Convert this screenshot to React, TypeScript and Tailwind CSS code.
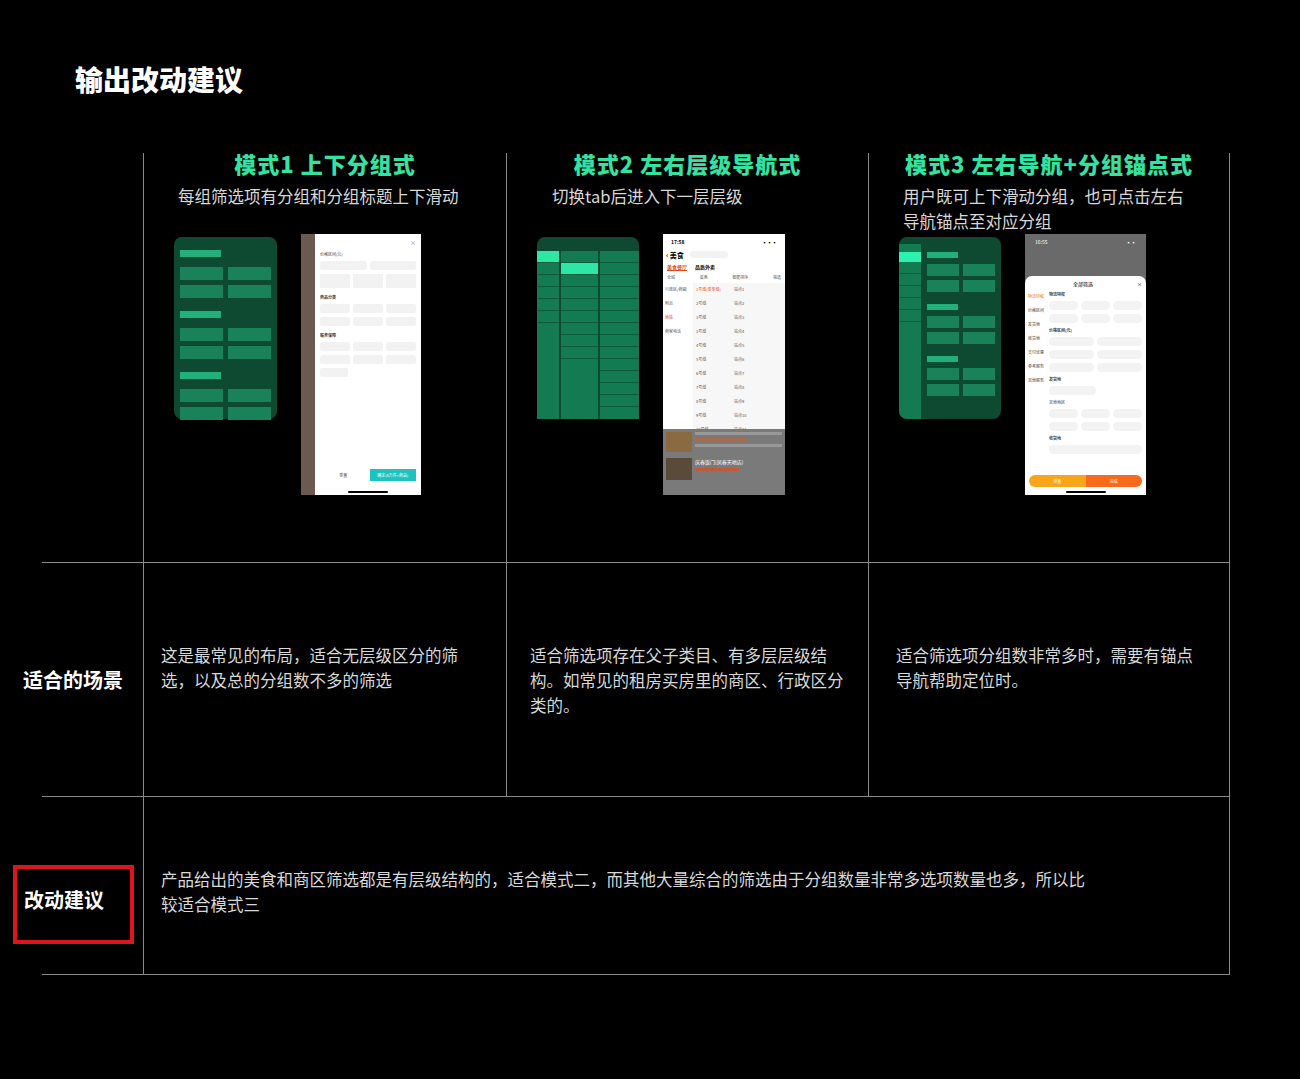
const font = { fontFamily: '"Noto Sans CJK SC", "Noto Sans", sans-serif' };

function Wire1() {
  const group = (
    <div className="flex flex-col gap-[5px]">
      <div className="w-[41px] h-[7px] bg-[#22b07a]" />
      <div className="grid grid-cols-2 gap-[5px] mt-[5px]">
        {[0, 1, 2, 3].map((i) => (
          <div key={i} className="h-[13px] bg-[#1a8258]" />
        ))}
      </div>
    </div>
  );
  return (
    <div className="w-[103px] h-[182px] rounded-[8px] bg-[#0e4a31] px-[6px] pt-[13px] flex flex-col gap-[13px]">
      {group}
      {group}
      {group}
    </div>
  );
}

function Wire2() {
  const rows = (n: number, hi: number) =>
    Array.from({ length: n }).map((_, i) => (
      <div key={i} className={`h-[12px] border-b border-[#0e5a3a] ${i === hi ? 'bg-[#2ee6a6]' : 'bg-[#147a52]'}`} />
    ));
  return (
    <div className="w-[102px] h-[182px] rounded-t-[8px] bg-[#0e4a31] pt-[14px] flex gap-[2px] overflow-hidden">
      <div className="w-[22px] bg-[#137a52] flex flex-col">{rows(6, 0)}</div>
      <div className="w-[37px] bg-[#137a52] flex flex-col">{rows(9, 1)}</div>
      <div className="flex-1 bg-[#137a52] flex flex-col">{rows(13, -1)}</div>
    </div>
  );
}

function Wire3() {
  const group = (
    <div className="flex flex-col">
      <div className="w-[31px] h-[6px] bg-[#22b07a]" />
      <div className="grid grid-cols-2 gap-[4px] mt-[6px]">
        {[0, 1, 2, 3].map((i) => (
          <div key={i} className="h-[12px] bg-[#1a8258]" />
        ))}
      </div>
    </div>
  );
  return (
    <div className="w-[102px] h-[182px] rounded-[8px] bg-[#0e4a31] pt-[7px] flex overflow-hidden">
      <div className="w-[22px] flex flex-col bg-[#137a52]">
        <div className="h-[8px]" />
        <div className="h-[10px] bg-[#2ef0b0]" />
        {[0, 1, 2, 3, 4].map((i) => (
          <div key={i} className="h-[12px] border-b border-[#0e5a3a]" />
        ))}
      </div>
      <div className="flex-1 px-[6px] pt-[8px] flex flex-col gap-[12px]">
        {group}
        {group}
        {group}
      </div>
    </div>
  );
}

function Chip({ w = 'flex-1' }: { w?: string }) {
  return <div className={`${w} h-[9px] bg-[#f2f2f2] rounded-[2px]`} />;
}

function Phone1() {
  return (
    <div className="w-[120px] h-[261px] bg-[#555] flex">
      <div className="w-[14px] bg-[#6a5a52]" />
      <div className="flex-1 bg-white px-[5px] pt-[4px] flex flex-col gap-[4px] text-[4px] text-[#444]">
        <div className="text-right text-[6px] text-[#888]">×</div>
        <div>价格区间(元)</div>
        <div className="flex gap-[3px]"><Chip /><Chip /></div>
        <div className="flex gap-[3px]"><div className="flex-1 h-[14px] bg-[#f2f2f2]" /><div className="flex-1 h-[14px] bg-[#f2f2f2]" /><div className="flex-1 h-[14px] bg-[#f2f2f2]" /></div>
        <div className="font-bold mt-[2px]">商品分类</div>
        <div className="flex gap-[3px]"><Chip /><Chip /><Chip /></div>
        <div className="flex gap-[3px]"><Chip /><Chip /><Chip /></div>
        <div className="font-bold mt-[2px]">服务保障</div>
        <div className="flex gap-[3px]"><Chip /><Chip /><Chip /></div>
        <div className="flex gap-[3px]"><Chip /><Chip /><Chip /></div>
        <div className="flex gap-[3px]"><Chip w="w-[28px]" /></div>
        <div className="flex-1" />
        <div className="flex gap-[3px] pb-[6px]">
          <div className="flex-1 h-[12px] text-center leading-[12px]">重置</div>
          <div className="flex-1 h-[12px] bg-[#1cc3c0] text-white text-center leading-[12px]">确定(4万件+商品)</div>
        </div>
        <div className="mx-auto w-[40px] h-[2px] bg-black rounded mb-[2px]" />
      </div>
    </div>
  );
}

function Phone2() {
  const mid = ['1号线(莘莘线)', '2号线', '3号线', '3号线', '4号线', '5号线', '6号线', '7号线', '8号线', '9号线', '10号线', '11号线'];
  return (
    <div className="w-[122px] h-[261px] bg-white flex flex-col overflow-hidden text-[4px] text-[#555]">
      <div className="flex justify-between px-[8px] pt-[4px] text-[5px] font-bold text-black"><span>17:58</span><span>▪▪▪</span></div>
      <div className="flex items-center gap-[6px] px-[3px] pt-[4px] text-[7px] font-bold text-black"><span>‹ 美食</span><div className="w-[38px] h-[7px] rounded bg-[#f3f3f3]" /></div>
      <div className="flex gap-[8px] px-[4px] pt-[3px] text-[5px] font-bold text-[#e24a1a]"><span className="underline">美食餐厅</span><span className="text-black">品质外卖</span></div>
      <div className="flex justify-between px-[4px] pt-[3px]"><span>全城</span><span>菜系</span><span>智能排序</span><span>筛选</span></div>
      <div className="flex h-[146px] mt-[3px]">
        <div className="w-[30px] bg-white flex flex-col gap-[8px] px-[2px] pt-[3px]"><span>行政区/商圈</span><span>附近</span><span className="text-[#e24a1a]">地铁</span><span>商家电话</span></div>
        <div className="w-[38px] bg-[#f7f7f7] flex flex-col gap-[8px] px-[3px] pt-[3px]">{mid.map((m, i) => <span key={i} className={i === 0 ? 'text-[#e24a1a]' : ''}>{m}</span>)}</div>
        <div className="flex-1 bg-[#f7f7f7] flex flex-col gap-[8px] px-[3px] pt-[3px]">{mid.map((_, i) => <span key={i}>站点{i + 1}</span>)}</div>
      </div>
      <div className="flex-1 bg-[#7a7a7a] px-[3px] pt-[3px] flex flex-col gap-[6px]">
        <div className="flex gap-[3px]"><div className="w-[26px] h-[20px] bg-[#8a6a40]" /><div className="flex-1 flex flex-col gap-[3px]"><div className="h-[3px] bg-[#999]" /><div className="h-[3px] bg-[#a86a50] w-[60%]" /><div className="h-[3px] bg-[#999]" /></div></div>
        <div className="flex gap-[3px]"><div className="w-[26px] h-[22px] bg-[#5a4a3a]" /><div className="flex-1 flex flex-col gap-[3px]"><div className="text-[5px] text-white">庆春饭门(凤春天地店)</div><div className="h-[3px] bg-[#c05a3a] w-[50%]" /></div></div>
      </div>
    </div>
  );
}

function Phone3() {
  const Pill = () => <div className="flex-1 h-[9px] bg-[#f3f3f3] rounded-full" />;
  return (
    <div className="w-[121px] h-[261px] bg-[#6a6a6a] flex flex-col overflow-hidden text-[4px] text-[#444]">
      <div className="flex justify-between px-[10px] pt-[4px] text-[5px] text-white"><span>16:55</span><span>▪▪</span></div>
      <div className="h-[30px]" />
      <div className="flex-1 bg-white rounded-t-[7px] flex flex-col">
        <div className="flex justify-between px-[4px] pt-[4px] text-[5px] text-black"><span /><span>全部筛选</span><span>×</span></div>
        <div className="flex flex-1 pt-[4px]">
          <div className="w-[24px] flex flex-col gap-[8px] pl-[3px] pt-[2px]"><span className="text-[#f06a2a]">物流特权</span><span>价格区间</span><span>发货地</span><span>收货地</span><span>支付优惠</span><span>参考服务</span><span>其他服务</span></div>
          <div className="flex-1 flex flex-col gap-[4px] pr-[4px]">
            <span className="font-bold">物流特权</span>
            <div className="flex gap-[3px]"><Pill /><Pill /><Pill /></div>
            <div className="flex gap-[3px]"><Pill /><Pill /><Pill /></div>
            <span className="font-bold">价格区间(元)</span>
            <div className="flex gap-[3px]"><Pill /><Pill /></div>
            <div className="flex gap-[3px]"><Pill /><Pill /></div>
            <div className="flex gap-[3px]"><Pill /><Pill /></div>
            <span className="font-bold">发货地</span>
            <div className="flex gap-[3px] w-[50%]"><Pill /></div>
            <span>其他地区</span>
            <div className="flex gap-[3px]"><Pill /><Pill /><Pill /></div>
            <div className="flex gap-[3px]"><Pill /><Pill /><Pill /></div>
            <span className="font-bold">收货地</span>
            <div className="flex gap-[3px]"><Pill /></div>
          </div>
        </div>
        <div className="flex mx-[4px] mb-[4px] h-[12px] rounded-full overflow-hidden text-white text-center leading-[12px]">
          <div className="flex-1 bg-[#f8a51a]">重置</div><div className="flex-1 bg-[#f86a1a]">完成</div>
        </div>
        <div className="mx-auto w-[40px] h-[2px] bg-black rounded mb-[2px]" />
      </div>
    </div>
  );
}

function Head({ title, sub, wire, phone }: { title: string; sub: string; wire: React.ReactNode; phone: React.ReactNode }) {
  return (
    <div className="flex flex-col items-center pt-[0px]">
      <div className="text-[22px] font-black text-[#34e3a3] leading-[20px] tracking-[1px]">{title}</div>
      <div className="text-[16.5px] text-[#d8d8d8] leading-[25px] mt-[11px] px-[34px] text-left w-full h-[50px]">{sub}</div>
      <div className="flex items-start gap-[24px] mt-[0px] w-full px-[30px]">
        <div className="mt-[3px]">{wire}</div>
        {phone}
      </div>
    </div>
  );
}

export default function App() {
  const line = 'border-[#8a8a8a]';
  return (
    <div className="w-[1300px] h-[1079px] bg-black relative" style={font}>
      <div className="absolute left-[75px] top-[58px] text-[28px] font-black text-white">输出改动建议</div>
      <div className="absolute left-[42px] top-[153px] grid grid-cols-[101px_363px_362px_362px]">
        {/* row 1 */}
        <div className={`h-[410px] border-b ${line}`} />
        <div className={`h-[410px] border-l border-b ${line} pt-[0px]`}>
          <Head title="模式1  上下分组式" sub="每组筛选项有分组和分组标题上下滑动" wire={<Wire1 />} phone={<Phone1 />} />
        </div>
        <div className={`h-[410px] border-l border-b ${line}`}>
          <Head title="模式2  左右层级导航式" sub={'\u00a0\u00a0\u00a0切换tab后进入下一层层级'} wire={<Wire2 />} phone={<Phone2 />} />
        </div>
        <div className={`h-[410px] border-l border-r border-b ${line}`}>
          <Head title="模式3  左右导航+分组锚点式" sub="用户既可上下滑动分组，也可点击左右导航锚点至对应分组" wire={<Wire3 />} phone={<Phone3 />} />
        </div>
        {/* row 2 */}
        <div className={`h-[234px] border-b ${line} flex items-center`}>
          <span className="text-[20px] font-bold text-white -ml-[19px] whitespace-nowrap">适合的场景</span>
        </div>
        <div className={`h-[234px] border-l border-b ${line} pl-[17px] pr-[20px] pt-[80px] text-[16.5px] leading-[25px] text-[#d8d8d8]`}>
          这是最常见的布局，适合无层级区分的筛选，以及总的分组数不多的筛选
        </div>
        <div className={`h-[234px] border-l border-b ${line} pl-[23px] pr-[20px] pt-[80px] text-[16.5px] leading-[25px] text-[#d8d8d8]`}>
          适合筛选项存在父子类目、有多层层级结构。如常见的租房买房里的商区、行政区分类的。
        </div>
        <div className={`h-[234px] border-l border-r border-b ${line} pl-[27px] pr-[20px] pt-[80px] text-[16.5px] leading-[25px] text-[#d8d8d8]`}>
          适合筛选项分组数非常多时，需要有锚点导航帮助定位时。
        </div>
        {/* row 3 */}
        <div className={`h-[178px] border-b ${line} relative`}>
          <div className="absolute left-[-29px] top-[68px] w-[121px] h-[79px] border-[4px] border-[#e0141b] flex items-center pl-[7px] pb-[10px]">
            <span className="text-[20px] font-bold text-white">改动建议</span>
          </div>
        </div>
        <div className={`col-span-3 h-[178px] border-l border-r border-b ${line} pl-[17px] pr-[140px] pt-[70px] text-[16.5px] leading-[25px] text-[#d8d8d8]`}>
          产品给出的美食和商区筛选都是有层级结构的，适合模式二，而其他大量综合的筛选由于分组数量非常多选项数量也多，所以比较适合模式三
        </div>
      </div>
    </div>
  );
}
